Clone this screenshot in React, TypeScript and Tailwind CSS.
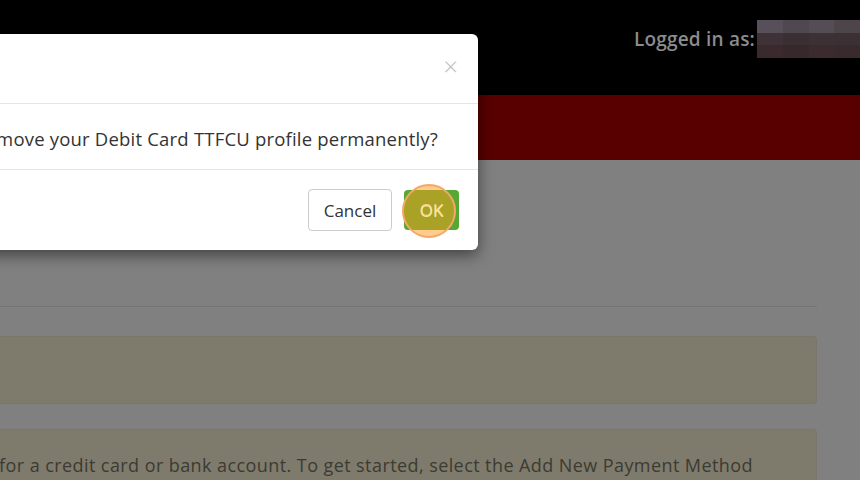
import React from 'react';

const font = { fontFamily: '"Open Sans", "Noto Sans", sans-serif' };

export default function App() {
  return (
    <div className="relative w-[860px] h-[480px] overflow-hidden bg-[#808080]" style={font}>
      {/* Top header */}
      <header className="h-[95px] bg-black flex items-start justify-end">
        <div className="flex items-center mt-[20px]">
          <span className="text-[19px] font-semibold text-[#8c8c8c] tracking-[0.2px]">Logged in as:</span>
          <div className="ml-[2px] w-[103px] h-[38px] grid grid-cols-4 grid-rows-3">
            <div className="bg-[#57505a]" />
            <div className="bg-[#4f4850]" />
            <div className="bg-[#544d55]" />
            <div className="bg-[#4d4549]" />
            <div className="bg-[#3e3236]" />
            <div className="bg-[#3a2f33]" />
            <div className="bg-[#3c3134]" />
            <div className="bg-[#3b3033]" />
            <div className="bg-[#3a2a2d]" />
            <div className="bg-[#37282b]" />
            <div className="bg-[#3b2b2f]" />
            <div className="bg-[#392a2d]" />
          </div>
        </div>
      </header>

      {/* Red nav bar */}
      <nav className="h-[65px] bg-[#580000]" />

      {/* Page content under overlay */}
      <main className="pr-[43px]">
        <div className="h-[147px] border-b border-[#747474]" />
        <div className="mt-[29px] h-[68px] rounded-r-[4px] bg-[#7e7b6d] border border-[#7a776a] border-l-0" />
        <div className="mt-[25px] h-[70px] rounded-r-[4px] bg-[#7e7b6d] border border-[#7a776a] border-l-0 flex justify-end pt-[22px] pr-[63px]">
          <p className="whitespace-nowrap text-[18px] text-[#3d3a31] tracking-[0.42px]">
            Add one or more payment methods for a credit card or bank account. To get started, select the Add New Payment Method
          </p>
        </div>
      </main>

      {/* Modal */}
      <div className="absolute top-[34px] left-[-140px] w-[618px] h-[216px] bg-white rounded-[6px] shadow-[0_5px_15px_rgba(0,0,0,0.5)] flex flex-col">
        <div className="h-[70px] border-b border-[#e5e5e5] flex items-center justify-end pr-[20px]">
          <span className="text-[26px] leading-none text-[#c2c2c2] font-light pb-[6px]">×</span>
        </div>
        <div className="h-[66px] border-b border-[#e5e5e5] flex items-center justify-end pr-[40px] pt-[5px] overflow-hidden">
          <p className="whitespace-nowrap text-[18.5px] text-[#333] tracking-[0.2px]">
            Are you sure you want to remove your Debit Card TTFCU profile permanently?
          </p>
        </div>
        <div className="flex-1 flex items-center justify-end pr-[19px] gap-[12px]">
          <button className="h-[42px] w-[84px] rounded-[4px] border border-[#cccccc] bg-white text-[17px] text-[#333] pt-[2px]">
            Cancel
          </button>
          <div className="relative">
            <button className="h-[40px] w-[55px] rounded-[4px] bg-[#55a834] text-[17px] text-white">
              OK
            </button>
            <div className="absolute left-[-2px] top-[-6px] w-[54px] h-[54px] rounded-full bg-[#ff9a1a]/50 border-2 border-[#f4a868]" />
            <span className="absolute inset-0 flex items-center justify-center text-[17px] text-[#f1eaa0] pt-[2px]">OK</span>
          </div>
        </div>
      </div>
    </div>
  );
}
